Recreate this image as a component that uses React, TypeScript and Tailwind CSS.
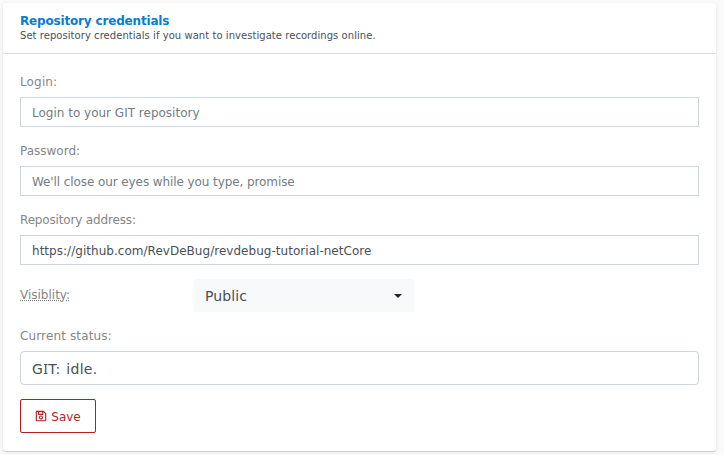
import { FaRegSave } from "react-icons/fa";

type FieldProps = {
  label: string;
  labelClass?: string;
  inputClass?: string;
  value?: string;
  placeholder?: string;
};

function Field({ label, labelClass = "", inputClass = "", value, placeholder }: FieldProps) {
  return (
    <div className="mb-4">
      <label className={`block h-[23px] text-[12px] leading-[16px] text-[#868686] ${labelClass}`}>{label}</label>
      <input
        className={`block h-[30px] w-full border border-[#ced4da] bg-white px-[11px] pt-[2px] text-[12px] text-[#495057] outline-none placeholder:text-[#757c83] ${inputClass}`}
        defaultValue={value}
        placeholder={placeholder}
        spellCheck={false}
      />
    </div>
  );
}

export default function App() {
  return (
    <div className="h-[455px] w-[724px] overflow-hidden bg-[#fafafa] pt-[3px] pl-[3px] font-['DejaVu_Sans',sans-serif]">
      <section className="h-[448px] w-[713px] rounded-[3px] bg-white shadow-[0_1px_1px_rgba(0,0,0,0.16),0_1px_5px_rgba(0,0,0,0.07)]">
        <header className="h-[51px] border-b border-[#dcdfe1] px-[17px] pt-[11px]">
          <h1 className="text-[12px] leading-[15px] font-bold tracking-[-0.17px] text-[#077dcf]">Repository credentials</h1>
          <p className="text-[10px] leading-[13px] tracking-[0.05px] text-[#495057]">Set repository credentials if you want to investigate recordings online.</p>
        </header>
        <form className="px-[17px] pt-[20px]">
          <Field label="Login:" labelClass="tracking-[0.15px]" placeholder="Login to your GIT repository" />
          <Field label="Password:" placeholder="We'll close our eyes while you type, promise" inputClass="tracking-[-0.09px]" />
          <Field
            label="Repository address:"
            labelClass="tracking-[-0.16px]"
            value="https://github.com/RevDeBug/revdebug-tutorial-netCore"
            inputClass="tracking-[0.03px]"
          />
          <div className="-mt-[2px] flex h-[33px] items-center">
            <span className="w-[174px] pb-[2px] text-[12px] text-[#868686]">
              <abbr className="underline decoration-dotted">Visiblity:</abbr>
            </span>
            <button type="button" className="flex h-[33px] w-[220px] items-center justify-between rounded-[3px] bg-[#f8f9fa] pr-3 pl-[11px] text-[14px] text-[#495057]">
              <span className="pt-[2px] tracking-[0.1px]">Public</span>
              <span className="border-x-4 border-t-4 border-x-transparent border-t-[#212529]" />
            </button>
          </div>
          <div className="mt-[15px] h-[24px] text-[12px] leading-[18px] tracking-[0.13px] text-[#868686]">Current status:</div>
          <div className="h-[34px] rounded-[4px] border border-[#ced4da] px-[11px] text-[14px] leading-[34px] tracking-[0.3px] text-[#495057] [word-spacing:1px]">
            G<span className="font-['Noto_Sans']">I</span>T: idle.
          </div>
          <button type="button" className="mt-[14px] flex h-[34px] w-[76px] items-center justify-center gap-1 rounded-[2px] border border-[#b21f1f] text-[12px] text-[#b21f1f]">
            <FaRegSave size={12} />
            <span className="pt-[2px]">Save</span>
          </button>
        </form>
      </section>
    </div>
  );
}
